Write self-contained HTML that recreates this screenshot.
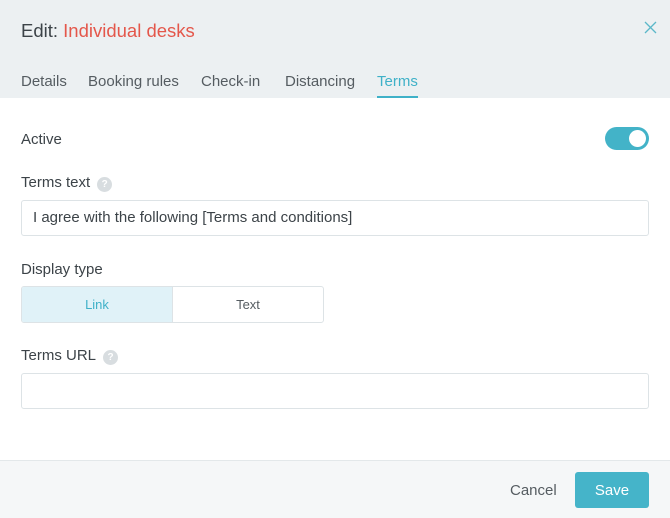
<!DOCTYPE html>
<html><head><style>
*{box-sizing:border-box;margin:0;padding:0}
body{width:670px;height:518px;background:#fff;font-family:"Liberation Sans",sans-serif;color:#3c4348;position:relative;overflow:hidden}
.a{position:absolute;white-space:nowrap}
.hdr{position:absolute;left:0;top:0;width:670px;height:98px;background:#ecf0f2}
.tab{font-size:15px;color:#555c61;top:73px}
.lbl{font-size:15px;color:#3c4348}
.q{display:inline-block;width:15px;height:15px;border-radius:50%;background:#d8dde0;color:#fff;font-size:10px;text-align:center;line-height:15px;font-weight:bold;vertical-align:0px;margin-left:7px}
.inp{position:absolute;left:21px;width:628px;height:36px;border:1px solid #dde3e6;border-radius:3px}
</style></head><body>
<div class="hdr"></div>
<div class="a" style="left:21px;top:20px;font-size:18.5px;color:#3c4348">Edit: <span style="color:#e4574b">Individual desks</span></div>
<svg class="a" style="left:644px;top:21px" width="13" height="13" viewBox="0 0 13 13"><path d="M1 1L12 12M12 1L1 12" stroke="#5bb8c9" stroke-width="1.3"/></svg>
<div class="a tab" style="left:21px">Details</div>
<div class="a tab" style="left:88px">Booking rules</div>
<div class="a tab" style="left:201px">Check-in</div>
<div class="a tab" style="left:285px">Distancing</div>
<div class="a tab" style="left:377px;color:#3fb1c8">Terms</div>
<div class="a" style="left:377px;top:96px;width:41px;height:2px;background:#3fb1c8"></div>
<div class="a lbl" style="left:21px;top:131px">Active</div>
<div class="a" style="left:605px;top:127px;width:44px;height:23px;border-radius:12px;background:#43b3c8"></div>
<div class="a" style="left:629px;top:130px;width:17px;height:17px;border-radius:50%;background:#fff"></div>
<div class="a lbl" style="left:21px;top:174px">Terms text<span class="q">?</span></div>
<div class="inp" style="top:200px"></div>
<div class="a" style="left:33px;top:209px;font-size:15px;color:#3c4348">I agree with the following [Terms and conditions]</div>
<div class="a lbl" style="left:21px;top:261px">Display type</div>
<div class="a" style="left:21px;top:286px;width:303px;height:37px;border:1px solid #dde3e6;border-radius:3px;overflow:hidden">
<div class="a" style="left:0;top:0;width:151px;height:35px;background:#e0f2f8;border-right:1px solid #dde3e6;color:#3fb1c8;font-size:13px;text-align:center;line-height:36px">Link</div>
<div class="a" style="left:151px;top:0;width:150px;height:35px;color:#555c61;font-size:13px;text-align:center;line-height:36px">Text</div>
</div>
<div class="a lbl" style="left:21px;top:347px">Terms URL<span class="q">?</span></div>
<div class="inp" style="top:373px"></div>
<div class="a" style="left:0;top:460px;width:670px;height:58px;background:#f5f7f8;border-top:1px solid #e3e8ea"></div>
<div class="a" style="left:510px;top:482px;font-size:15px;color:#555c61">Cancel</div>
<div class="a" style="left:575px;top:472px;width:74px;height:36px;background:#45b4c9;border-radius:3px;color:#fff;font-size:15px;text-align:center;line-height:38px">Save</div>
</body></html>
